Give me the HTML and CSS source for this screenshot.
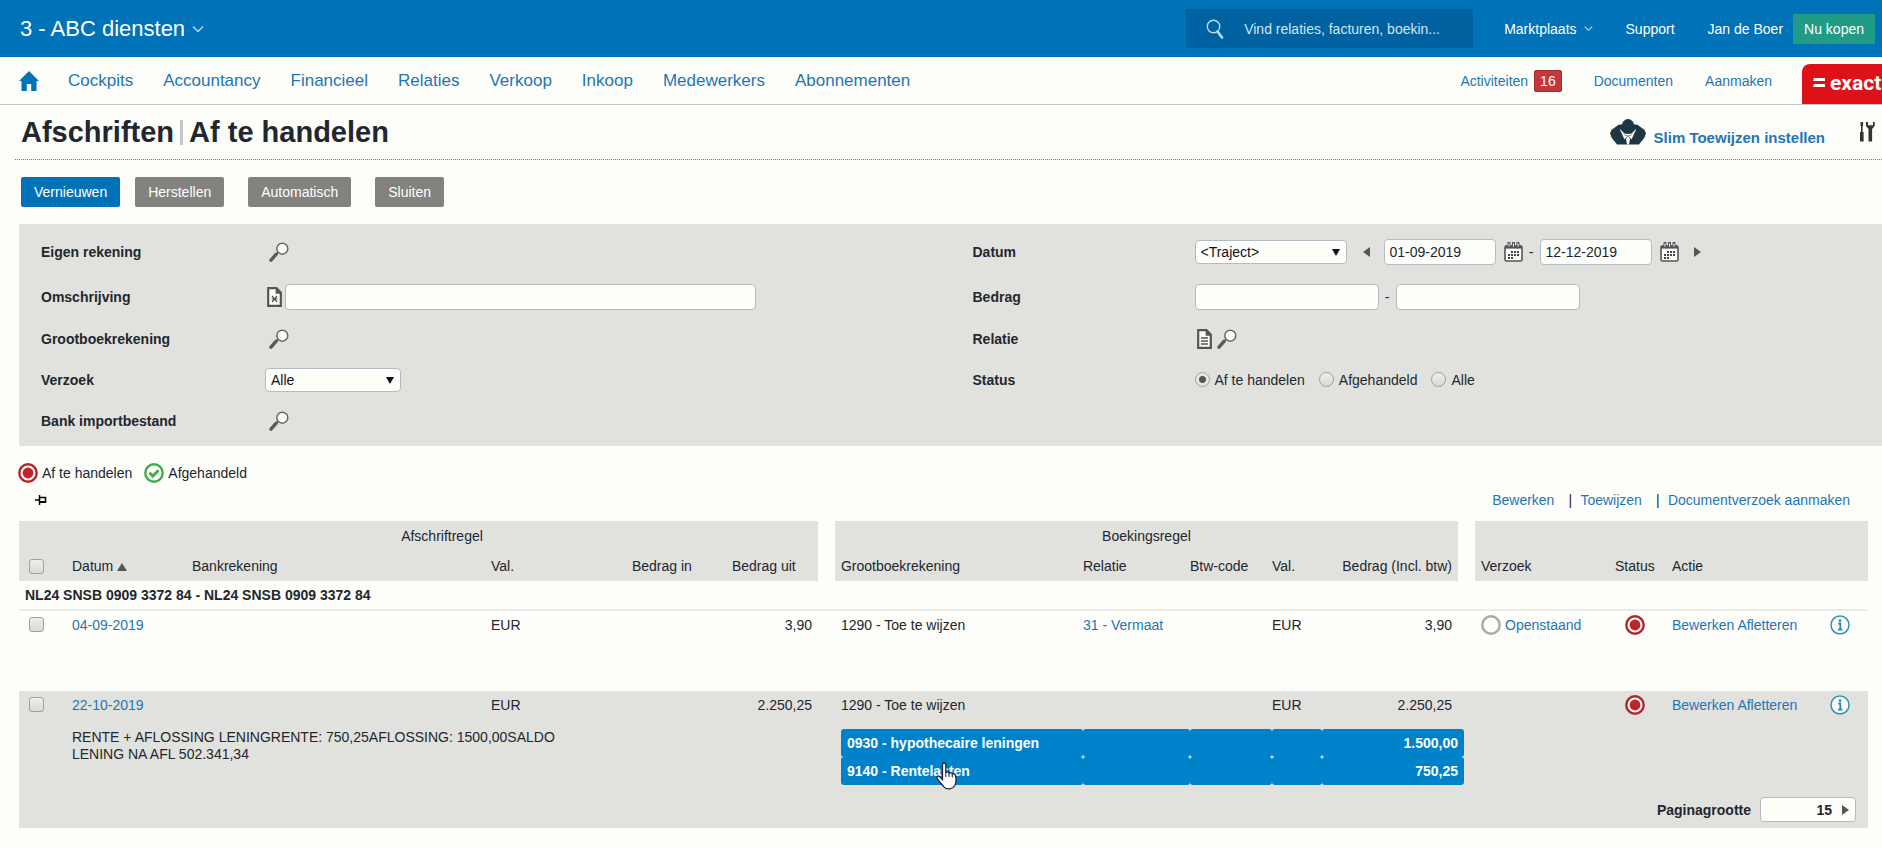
FILE: index.html
```html
<!DOCTYPE html>
<html lang="nl">
<head>
    <meta charset="UTF-8">
    <meta name="viewport" content="width=device-width, initial-scale=1.0">
    <title>Afschriften | Af te handelen</title>
    <link rel="stylesheet" href="styles.css">
</head>
<body>
    <!-- Shared icons -->
    <svg class="sprite" aria-hidden="true">
        <symbol id="icon-lookup" viewBox="0 0 20 20">
            <path d="M2 18.2L7.2 12.2" stroke="#5a5a5a" stroke-width="3.4" stroke-linecap="round"/>
            <path d="M7 12.5l2.6-2.7" stroke="#5a5a5a" stroke-width="1.6"/>
            <circle cx="13.3" cy="6.7" r="5.5" fill="#fdfdfa" stroke="#666" stroke-width="1.5"/>
        </symbol>
        <symbol id="icon-page" viewBox="0 0 15 20">
            <path d="M1.2 1.2h8.3l4.3 4.6v13H1.2z" fill="#fdfdfa" stroke="#555" stroke-width="2.2"/>
            <path d="M8.6 1v5.8h5.6z" fill="#555"/>
        </symbol>
        <symbol id="icon-calendar" viewBox="0 0 19 20">
            <rect x="1" y="4" width="17" height="15" rx="1.5" fill="#fdfdfa" stroke="#555" stroke-width="1.6"/>
            <path d="M1 3.6h17v3H1z" fill="#555"/>
            <path d="M5 1v3.5M9.5 1v3.5M14 1v3.5" stroke="#555" stroke-width="3" stroke-linecap="round"/>
            <path d="M5 1.5v3M9.5 1.5v3M14 1.5v3" stroke="#fdfdfa" stroke-width="1"/>
            <path d="M7 10h9M4 13h12M4 16h6" stroke="#444" stroke-width="2" stroke-dasharray="2 1"/>
        </symbol>
        <symbol id="icon-open" viewBox="0 0 20 20">
            <circle cx="10" cy="10" r="8.7" fill="#fdfdfa" stroke="#b5242b" stroke-width="2.4"/>
            <circle cx="10" cy="10" r="5.4" fill="#c1232b"/>
        </symbol>
        <symbol id="icon-info" viewBox="0 0 20 20">
            <circle cx="10" cy="10" r="9" fill="#fdfdfa" stroke="#2d93bb" stroke-width="1.5"/>
            <circle cx="10" cy="5.6" r="1.3" fill="#2d84b5"/>
            <path d="M8.3 8.5h2v6M8 14.7h4.4" fill="none" stroke="#2d84b5" stroke-width="1.8"/>
        </symbol>
        <symbol id="icon-chevron" viewBox="0 0 12 8">
            <path d="M1 1.5l5 5 5-5" fill="none" stroke="#b9dcf2" stroke-width="1.4"/>
        </symbol>
    </svg>

    <header class="topbar">
        <button type="button" class="company">3 - ABC diensten <svg class="chevron"><use href="#icon-chevron"/></svg></button>
        <label class="search">
            <svg width="18" height="20" viewBox="0 0 18 20" fill="none" stroke="#b9dcf2">
                <circle cx="7.5" cy="7.5" r="6.2" stroke-width="1.4"/>
                <path d="M11.5 12.5l4.5 6" stroke-width="2.6" stroke-linecap="round"/>
            </svg>
            <input type="text" placeholder="Vind relaties, facturen, boekin..." aria-label="Zoeken">
        </label>
        <nav class="topbar-links">
            <a href="#">Marktplaats <svg class="chevron small"><use href="#icon-chevron"/></svg></a>
            <a href="#">Support</a>
            <a href="#">Jan de Boer</a>
        </nav>
        <button type="button" class="buy">Nu kopen</button>
    </header>

    <nav class="menu">
        <a href="#" class="home" aria-label="Home">
            <svg width="20" height="20" viewBox="0 0 20 20"><path d="M10 0L0 10h2.500v10h5.300v-7h4.400v7h5.300V10H20z" fill="#0072b8"/></svg>
        </a>
        <div class="menu-main">
            <a href="#">Cockpits</a>
            <a href="#">Accountancy</a>
            <a href="#">Financieel</a>
            <a href="#">Relaties</a>
            <a href="#">Verkoop</a>
            <a href="#">Inkoop</a>
            <a href="#">Medewerkers</a>
            <a href="#">Abonnementen</a>
        </div>
        <div class="menu-side">
            <a href="#">Activiteiten <span class="count">16</span></a>
            <a href="#">Documenten</a>
            <a href="#">Aanmaken</a>
        </div>
        <div class="brand">
            <svg width="12" height="9" viewBox="0 0 12 9"><path d="M1 0h11v3H0zM1 6h11v3H0z" fill="#fff"/></svg>
            <span>exact</span>
        </div>
    </nav>

    <div class="title-bar">
        <h1>Afschriften<span class="divider"></span>Af te handelen</h1>
        <a href="#" class="assign">
            <svg width="36" height="26" viewBox="0 0 36 26">
                <path d="M12 5.500L9 5.500 2 10.500 0 14l1.500 4.500L7 25.500h22l5.500-7L36 14l-2-3.500-7-5h-3z" fill="#1d3644"/>
                <path d="M9.500 9.500l5 11 3.500-4 3.500 4 5-11-5 5h-7z" fill="#fdfdfa"/>
                <path d="M18 17l-2 3 1 5.500h2l1-5.500z" fill="#fdfdfa"/>
                <ellipse cx="18" cy="7.500" rx="6.300" ry="7.500" fill="#1d3644"/>
                <path d="M12.500 13.500q5.500 6 11 0l-3 3.500h-5z" fill="#718793"/>
            </svg>
            <span>Slim Toewijzen instellen</span>
        </a>
        <button type="button" class="tools" aria-label="Instellingen">
            <svg width="16" height="20" viewBox="0 0 16 20" fill="#333">
                <path d="M2 0h1.600v10H2zM1 10h3.600v9.500H1zM1.500 0h2.600v4H1.500z"/>
                <path d="M7 0v4l2.500 3v12.500h3.600V7l2.600-3V0h-1.700v3.200H9V0z"/>
            </svg>
        </button>
    </div>

    <div class="actions">
        <button type="button" class="btn primary">Vernieuwen</button>
        <button type="button" class="btn">Herstellen</button>
        <button type="button" class="btn spaced">Automatisch</button>
        <button type="button" class="btn spaced">Sluiten</button>
    </div>

    <form class="filters">
        <div class="filter-column">
            <label for="rekening">Eigen rekening</label>
            <div class="field"><button type="button" class="icon-btn lookup" id="rekening"><svg width="20" height="20"><use href="#icon-lookup"/></svg></button></div>
            <label for="omschrijving">Omschrijving</label>
            <div class="field">
                <svg class="search-type" width="15" height="20"><use href="#icon-page"/><path d="M5 9l5 6M10 9l-5 6M4.500 12h6" stroke="#555" stroke-width="1.200"/></svg>
                <input type="text" class="description" id="omschrijving">
            </div>
            <label for="grootboek">Grootboekrekening</label>
            <div class="field"><button type="button" class="icon-btn lookup" id="grootboek"><svg width="20" height="20"><use href="#icon-lookup"/></svg></button></div>
            <label for="verzoek">Verzoek</label>
            <div class="field">
                <span class="select request"><select id="verzoek"><option>Alle</option></select></span>
            </div>
            <label for="import">Bank importbestand</label>
            <div class="field"><button type="button" class="icon-btn lookup" id="import"><svg width="20" height="20"><use href="#icon-lookup"/></svg></button></div>
        </div>
        <div class="filter-column">
            <label for="datum">Datum</label>
            <div class="field">
                <span class="select period"><select id="datum"><option>&lt;Traject&gt;</option></select></span>
                <button type="button" class="step prev" aria-label="Vorige"></button>
                <input type="text" class="date" value="01-09-2019" aria-label="Datum van">
                <button type="button" class="icon-btn calendar" aria-label="Kalender"><svg width="19" height="20"><use href="#icon-calendar"/></svg></button>
                <span class="dash">-</span>
                <input type="text" class="date" value="12-12-2019" aria-label="Datum tot">
                <button type="button" class="icon-btn calendar" aria-label="Kalender"><svg width="19" height="20"><use href="#icon-calendar"/></svg></button>
                <button type="button" class="step next" aria-label="Volgende"></button>
            </div>
            <label for="bedrag">Bedrag</label>
            <div class="field">
                <input type="text" class="amount" id="bedrag">
                <span class="dash">-</span>
                <input type="text" class="amount" aria-label="Bedrag tot">
            </div>
            <label for="relatie">Relatie</label>
            <div class="field relation">
                <svg width="15" height="20"><use href="#icon-page"/><path d="M4 9h7M4 12h7M4 15h7" stroke="#555" stroke-width="1.500"/></svg>
                <button type="button" class="icon-btn" id="relatie"><svg width="20" height="20"><use href="#icon-lookup"/></svg></button>
            </div>
            <span class="label">Status</span>
            <div class="field radios">
                <label><input type="radio" name="status" checked>Af te handelen</label>
                <label><input type="radio" name="status">Afgehandeld</label>
                <label><input type="radio" name="status">Alle</label>
            </div>
        </div>
    </form>

    <div class="legend">
        <svg width="20" height="20"><use href="#icon-open"/></svg>
        <span>Af te handelen</span>
        <svg width="20" height="20" viewBox="0 0 20 20">
            <circle cx="10" cy="10" r="8.700" fill="#fdfdfa" stroke="#3fae49" stroke-width="2.400"/>
            <path d="M5.500 9.800l3.300 3.500 5.700-6" fill="none" stroke="#3fae49" stroke-width="2.800"/>
        </svg>
        <span>Afgehandeld</span>
    </div>

    <div class="table-tools">
        <svg width="12" height="10" viewBox="0 0 12 10"><path d="M0 5h4M4.500 0v10M4.500 2.500h6v4.500h-6" fill="none" stroke="#000" stroke-width="1.500"/><path d="M4.500 6h6.700v1.800H4.500z"/></svg>
        <div class="table-links">
            <a href="#">Bewerken</a>
            <span class="pipe">|</span>
            <a href="#">Toewijzen</a>
            <span class="pipe">|</span>
            <a href="#">Documentverzoek aanmaken</a>
        </div>
    </div>

    <table class="statements">
        <colgroup>
            <col class="c-check"><col class="c-date"><col><col class="c-val"><col class="c-in"><col class="c-out">
            <col class="c-gap">
            <col class="c-ledger"><col class="c-relation"><col class="c-vat"><col class="c-cur"><col class="c-amount">
            <col class="c-gap">
            <col class="c-request"><col class="c-status"><col class="c-action"><col class="c-info">
        </colgroup>
        <thead>
            <tr>
                <th></th>
                <th colspan="5" class="center">Afschriftregel</th>
                <td class="gap"></td>
                <th colspan="5" class="center">Boekingsregel</th>
                <td class="gap"></td>
                <th colspan="4"></th>
            </tr>
            <tr>
                <th class="check"><input type="checkbox" aria-label="Alles selecteren"></th>
                <th>Datum<span class="sort"></span></th>
                <th>Bankrekening</th>
                <th>Val.</th>
                <th>Bedrag in</th>
                <th>Bedrag uit</th>
                <td class="gap"></td>
                <th>Grootboekrekening</th>
                <th>Relatie</th>
                <th>Btw-code</th>
                <th>Val.</th>
                <th class="num">Bedrag (Incl. btw)</th>
                <td class="gap"></td>
                <th>Verzoek</th>
                <th>Status</th>
                <th>Actie</th>
                <th></th>
            </tr>
        </thead>
        <tbody>
            <tr class="account">
                <td colspan="17">NL24 SNSB 0909 3372 84 - NL24 SNSB 0909 3372 84</td>
            </tr>
            <tr class="line tall">
                <td class="check"><input type="checkbox" aria-label="Selecteer 04-09-2019"></td>
                <td><a href="#">04-09-2019</a></td>
                <td></td>
                <td>EUR</td>
                <td></td>
                <td class="num">3,90</td>
                <td></td>
                <td>1290 - Toe te wijzen</td>
                <td><a href="#">31 - Vermaat</a></td>
                <td></td>
                <td>EUR</td>
                <td class="num">3,90</td>
                <td></td>
                <td class="icon"><a href="#" class="state"><svg width="20" height="20" viewBox="0 0 20 20"><circle cx="10" cy="10" r="8.700" fill="#fdfdfa" stroke="#a9a9a9" stroke-width="2.400"/></svg>Openstaand</a></td>
                <td class="icon status"><svg width="20" height="20"><use href="#icon-open"/></svg></td>
                <td><a href="#">Bewerken</a> <a href="#">Afletteren</a></td>
                <td class="icon"><a href="#" aria-label="Info"><svg width="20" height="20"><use href="#icon-info"/></svg></a></td>
            </tr>
        </tbody>
        <tbody class="selected">
            <tr class="line">
                <td class="check"><input type="checkbox" aria-label="Selecteer 22-10-2019"></td>
                <td><a href="#">22-10-2019</a></td>
                <td></td>
                <td>EUR</td>
                <td></td>
                <td class="num">2.250,25</td>
                <td></td>
                <td>1290 - Toe te wijzen</td>
                <td></td>
                <td></td>
                <td>EUR</td>
                <td class="num">2.250,25</td>
                <td></td>
                <td></td>
                <td class="icon status"><svg width="20" height="20"><use href="#icon-open"/></svg></td>
                <td><a href="#">Bewerken</a> <a href="#">Afletteren</a></td>
                <td class="icon"><a href="#" aria-label="Info"><svg width="20" height="20"><use href="#icon-info"/></svg></a></td>
            </tr>
            <tr class="detail">
                <td></td>
                <td colspan="3" class="memo">RENTE + AFLOSSING LENINGRENTE: 750,25AFLOSSING: 1500,00SALDO<br>LENING NA AFL 502.341,34</td>
                <td colspan="2"></td>
                <td></td>
                <td colspan="6">
                    <table class="split">
                        <colgroup><col class="c-ledger"><col class="c-relation"><col class="c-vat"><col class="c-cur"><col class="c-amount"></colgroup>
                        <tr>
                            <td>0930 - hypothecaire leningen</td>
                            <td></td><td></td><td></td>
                            <td class="num">1.500,00</td>
                        </tr>
                        <tr>
                            <td>9140 - Rentelasten
                                <svg class="pointer" width="22" height="29" viewBox="0 0 22 29">
                                    <path d="M6.500 2.500c0-2 3.300-2 3.300 0v8.300c.6-1.300 3-1.200 3.300.4.800-1 2.900-.8 3.200.9 1-.8 3-.4 3.200 1.400.9 4 .7 7.500-.9 10.500-1.800 3.200-7.800 4-10.400 1.100C6 22.500 3 19.500 1.100 16.300c-.8-1.700 1.100-2.800 2.500-1.700l2.900 3z" fill="#fff" stroke="#223" stroke-width="1.300"/>
                                    <path d="M9.800 10v5M13.100 11v4M16.300 12v3.500" stroke="#223"/>
                                </svg>
                            </td>
                            <td></td><td></td><td></td>
                            <td class="num">750,25</td>
                        </tr>
                    </table>
                </td>
                <td colspan="4"></td>
            </tr>
            <tr class="pager">
                <td colspan="17">
                    <div class="page-size">
                        <label for="paginagrootte">Paginagrootte</label>
                        <span class="page-box"><input type="text" id="paginagrootte" value="15"><button type="button" class="step next" aria-label="Kies paginagrootte"></button></span>
                    </div>
                </td>
            </tr>
        </tbody>
    </table>
</body>
</html>
```
FILE: styles.css
```css
* {
    box-sizing: border-box;
}
body {
    margin: 0;
    background: #fdfdfa;
    color: #22272e;
    font-family: "Liberation Sans", Arial, sans-serif;
    font-size: 14px;
    line-height: 16px;
    overflow-x: hidden;
}
a {
    color: #1f76b3;
    text-decoration: none;
    white-space: nowrap;
}
button,
input,
select {
    font: inherit;
    color: inherit;
}
button {
    border: none;
    padding: 0;
    background: none;
    cursor: pointer;
}
svg {
    display: block;
    flex: none;
}
.sprite {
    position: absolute;
    width: 0;
    height: 0;
}

/* Top bar */
.topbar {
    display: flex;
    align-items: center;
    height: 57px;
    padding: 0 7px 0 20px;
    background: #0072b8;
    color: #fff;
}
.company {
    display: flex;
    align-items: center;
    gap: 7px;
    margin-right: auto;
    font-size: 22px;
    line-height: 24px;
    white-space: nowrap;
}
.chevron {
    width: 12px;
    height: 8px;
}
.chevron.small {
    width: 9px;
    height: 7px;
}
.search {
    display: flex;
    align-items: center;
    gap: 20px;
    width: 287px;
    height: 39px;
    margin-right: 31px;
    padding: 0 20px;
    background: #0061a1;
}
.search input {
    flex: 1;
    min-width: 0;
    padding: 0;
    border: none;
    background: none;
}
.search input::placeholder {
    color: #d3e6f3;
    opacity: 1;
}
.topbar-links {
    display: flex;
    gap: 33px;
    margin-right: 10px;
}
.topbar-links a {
    display: flex;
    align-items: center;
    gap: 7px;
    color: #fff;
}
.buy {
    height: 30px;
    padding: 0 11px;
    background: #229b86;
    color: #fff;
}

/* Main menu */
.menu {
    display: flex;
    align-items: center;
    height: 48px;
    padding-left: 19px;
    border-bottom: 1px solid #c4c6c6;
}
.menu-main {
    display: flex;
    gap: 30px;
    margin: 0 auto 0 29px;
    font-size: 17px;
    line-height: 20px;
}
.menu-side {
    display: flex;
    gap: 32px;
    margin-right: 30px;
}
.menu-side a {
    display: flex;
    align-items: center;
    gap: 6px;
}
.count {
    padding: 2px 5px;
    border: 1px solid #a32c31;
    border-radius: 2px;
    background: #c4383d;
    color: #fff;
}
.brand {
    display: flex;
    align-items: center;
    align-self: flex-end;
    gap: 5px;
    width: 80px;
    height: 40px;
    padding: 0 0 3px 11px;
    overflow: hidden;
    border-top-left-radius: 8px;
    background: #de1118;
    color: #fff;
    font-family: Roboto, "Liberation Sans", sans-serif;
    font-size: 21px;
    font-weight: bold;
}

/* Page title */
.title-bar {
    display: flex;
    align-items: center;
    height: 55px;
    margin-left: 15px;
    padding: 0 7px 0 6px;
    border-bottom: 1px dotted #6b7783;
}
h1 {
    display: flex;
    align-items: center;
    margin: 0 auto 0 0;
    font-size: 29px;
    line-height: 32px;
    white-space: nowrap;
}
.divider {
    width: 3px;
    height: 25px;
    margin: 0 6px;
    background: #c3c7ca;
}
.assign {
    display: flex;
    align-items: center;
    gap: 8px;
    margin-right: 34px;
    font-size: 15px;
    font-weight: bold;
}
.assign span {
    padding-top: 12px;
}

/* Action buttons */
.actions {
    display: flex;
    gap: 15px;
    padding: 17px 21px;
}
.btn {
    height: 30px;
    padding: 0 13px;
    border-radius: 2px;
    background: #82827e;
    color: #fff;
}
.btn.primary {
    background: #0072b8;
}
.btn.spaced {
    margin-left: 9px;
}

/* Filters */
.filters {
    display: grid;
    grid-template-columns: 1fr 1fr;
    margin-left: 19px;
    padding: 5px 0;
    background: #e1e1de;
}
.filter-column {
    display: grid;
    grid-template-columns: 224px 1fr;
    grid-template-rows: 46px 44px 40px 41px 41px;
    align-items: center;
    padding-left: 22px;
}
.filter-column + .filter-column {
    grid-template-columns: 222px 1fr;
}
.filter-column > label,
.filter-column > .label {
    font-weight: bold;
}
.field {
    display: flex;
    align-items: center;
}
.field input[type="text"] {
    height: 26px;
    padding: 0 5px;
    border: 1px solid #b4bcc3;
    border-radius: 4px;
    background: #fdfdfa;
}
.lookup {
    margin-left: 4px;
}
.search-type {
    margin: 0 3px 0 2px;
}
.field .description {
    width: 471px;
}
.field .amount {
    width: 184px;
}
.field .date {
    width: 112px;
}
.select {
    position: relative;
    color: #111;
}
.select select {
    width: 100%;
    height: 24px;
    padding: 0 5px;
    border: 1px solid #b4bcc3;
    border-radius: 4px;
    background: #fdfdfa;
    appearance: none;
}
.select::after {
    content: "";
    position: absolute;
    top: 9px;
    right: 7px;
    border: 4px solid transparent;
    border-top: 7px solid #111;
    border-bottom: none;
    pointer-events: none;
}
.select.request {
    width: 136px;
}
.select.period {
    width: 152px;
}
.step {
    width: 0;
    height: 0;
    border: 5px solid transparent;
}
.step.prev {
    margin: 0 14px 0 16px;
    border-left: none;
    border-right: 7px solid #555;
}
.step.next {
    margin-left: 15px;
    border-right: none;
    border-left: 7px solid #555;
}
.calendar {
    margin-left: 8px;
}
.dash {
    width: 17px;
    text-align: center;
}
.relation {
    gap: 5px;
    padding-left: 2px;
}
.radios {
    gap: 14px;
}
.radios label {
    display: flex;
    align-items: center;
    gap: 5px;
}
input[type="radio"],
input[type="checkbox"] {
    display: block;
    width: 15px;
    height: 15px;
    margin: 0;
    border: 1px solid #a0a0a0;
    background: linear-gradient(#eeeeec, #d9d9d7);
    appearance: none;
}
input[type="radio"] {
    border-radius: 50%;
}
input[type="checkbox"] {
    border-radius: 3px;
}
input[type="radio"]:checked {
    background: radial-gradient(circle, #555 3px, #e6e6e4 4px);
}

/* Legend and table links */
.legend {
    display: flex;
    align-items: center;
    gap: 4px;
    padding: 17px 18px 0;
}
.legend span + svg {
    margin-left: 8px;
}
.table-tools {
    display: flex;
    align-items: center;
    justify-content: space-between;
    padding: 9px 32px 13px 35px;
}
.table-links {
    display: flex;
}
.pipe {
    width: 26px;
    padding-left: 6px;
    text-align: center;
}

/* Statement lines */
table {
    border-spacing: 0;
    table-layout: fixed;
}
.statements {
    width: calc(100% - 33px);
    margin: 0 14px 20px 19px;
}
.c-check { width: 47px; }
.c-date { width: 120px; }
.c-val { width: 141px; }
.c-in { width: 100px; }
.c-out { width: 92px; }
.c-gap { width: 17px; }
.c-ledger { width: 242px; }
.c-relation { width: 107px; }
.c-vat { width: 82px; }
.c-cur { width: 50px; }
.c-amount { width: 142px; }
.c-request { width: 134px; }
.c-status { width: 57px; }
.c-action { width: 158px; }
.c-info { width: 44px; }
th,
td {
    padding: 0 6px;
    text-align: left;
    white-space: nowrap;
}
th {
    height: 30px;
    background: #e1e1de;
    font-weight: normal;
}
.center {
    text-align: center;
}
.num {
    text-align: right;
}
.check {
    padding-left: 10px;
}
.sort {
    display: inline-block;
    margin-left: 4px;
    border: 5px solid transparent;
    border-top: none;
    border-bottom: 8px solid #555;
}
.account td {
    height: 30px;
    border-bottom: 2px solid #ebebe8;
    font-weight: bold;
}
.line td {
    padding-top: 6px;
    vertical-align: top;
}
.line .icon {
    padding-top: 4px;
}
.line .status {
    padding-left: 16px;
}
.state {
    display: flex;
    align-items: center;
    gap: 4px;
}
.tall {
    height: 80px;
}
.selected {
    background: #e1e1de;
}
.selected .line {
    height: 38px;
}
.detail td {
    vertical-align: top;
}
.detail .memo {
    line-height: 17px;
}
.split {
    color: #fff;
    font-weight: bold;
}
.split td {
    position: relative;
    height: 28px;
    border-radius: 3px;
    background: #0082cb;
    vertical-align: middle;
}
.pointer {
    position: absolute;
    top: 5px;
    left: 95px;
}
.pager td {
    padding: 12px 12px 6px;
}
.page-size {
    display: flex;
    align-items: center;
    justify-content: flex-end;
    gap: 9px;
    font-weight: bold;
}
.page-box {
    display: flex;
    align-items: center;
    width: 96px;
    height: 25px;
    padding-right: 6px;
    border: 1px solid #b4bcc3;
    border-radius: 4px;
    background: #fdfdfa;
}
.page-box input {
    flex: 1;
    min-width: 0;
    padding: 0;
    border: none;
    background: none;
    text-align: right;
}
.page-box .step {
    margin-left: 10px;
}
```
